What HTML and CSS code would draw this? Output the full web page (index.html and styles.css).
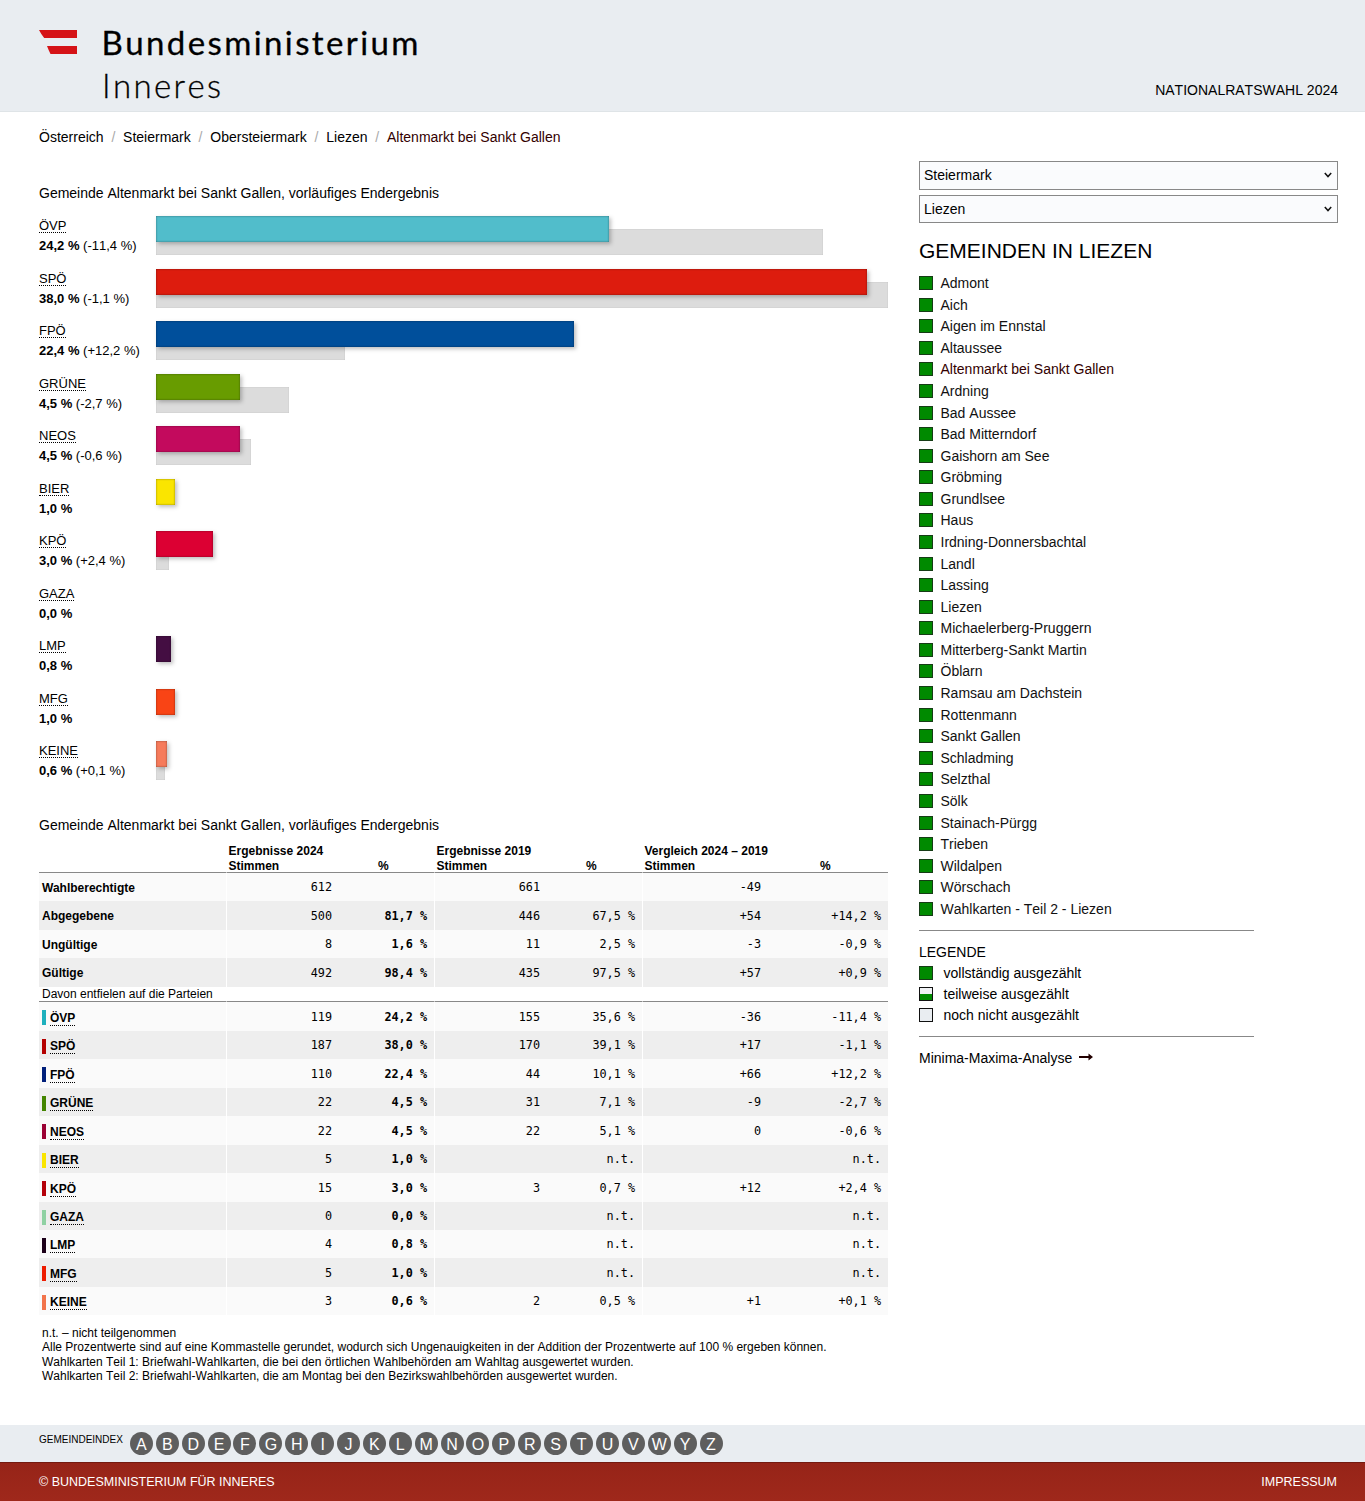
FILE: index.html
```html
<!DOCTYPE html>
<html lang="de">
<head>
<meta charset="utf-8">
<title>Nationalratswahl 2024 – Altenmarkt bei Sankt Gallen</title>
<link rel="stylesheet" href="styles.css">
</head>
<body>
<header class="header">
  <svg class="logo" width="400" height="111" viewBox="0 0 400 111" role="img" aria-label="Bundesministerium Inneres">
    <path class="logo-flag" d="M0 30H38V38H5.200Q2 34 0 30ZM8 46H38V54H11.500Q9.500 50 8 46Z"/>
    <text class="logo-main" x="62.500" y="54.500" textLength="317">Bundesministerium</text>
    <text class="logo-sub" x="63" y="98" textLength="119">Inneres</text>
  </svg>
  <div class="election">NATIONALRATSWAHL 2024</div>
</header>
<div class="page">
  <main class="main">
    <nav class="crumbs"><a>Österreich</a><i>/</i><a>Steiermark</a><i>/</i><a>Obersteiermark</a><i>/</i><a>Liezen</a><i>/</i><a class="current">Altenmarkt bei Sankt Gallen</a></nav>
    <h2 class="title">Gemeinde Altenmarkt bei Sankt Gallen, vorläufiges Endergebnis</h2>
    <section class="chart">
      <div class="party oevp"><div class="label"><abbr>ÖVP</abbr><p><b>24,2 %</b> (-11,4 %)</p></div><div class="bars"><div class="bar" style="width:453px"></div><div class="prev" style="width:667px"></div></div></div>
      <div class="party spoe"><div class="label"><abbr>SPÖ</abbr><p><b>38,0 %</b> (-1,1 %)</p></div><div class="bars"><div class="bar" style="width:711px"></div><div class="prev" style="width:732px"></div></div></div>
      <div class="party fpoe"><div class="label"><abbr>FPÖ</abbr><p><b>22,4 %</b> (+12,2 %)</p></div><div class="bars"><div class="bar" style="width:418px"></div><div class="prev" style="width:189px"></div></div></div>
      <div class="party gruene"><div class="label"><abbr>GRÜNE</abbr><p><b>4,5 %</b> (-2,7 %)</p></div><div class="bars"><div class="bar" style="width:84px"></div><div class="prev" style="width:133px"></div></div></div>
      <div class="party neos"><div class="label"><abbr>NEOS</abbr><p><b>4,5 %</b> (-0,6 %)</p></div><div class="bars"><div class="bar" style="width:84px"></div><div class="prev" style="width:95px"></div></div></div>
      <div class="party bier"><div class="label"><abbr>BIER</abbr><p><b>1,0 %</b></p></div><div class="bars"><div class="bar" style="width:19px"></div></div></div>
      <div class="party kpoe"><div class="label"><abbr>KPÖ</abbr><p><b>3,0 %</b> (+2,4 %)</p></div><div class="bars"><div class="bar" style="width:57px"></div><div class="prev" style="width:13px"></div></div></div>
      <div class="party gaza"><div class="label"><abbr>GAZA</abbr><p><b>0,0 %</b></p></div><div class="bars"></div></div>
      <div class="party lmp"><div class="label"><abbr>LMP</abbr><p><b>0,8 %</b></p></div><div class="bars"><div class="bar" style="width:15px"></div></div></div>
      <div class="party mfg"><div class="label"><abbr>MFG</abbr><p><b>1,0 %</b></p></div><div class="bars"><div class="bar" style="width:19px"></div></div></div>
      <div class="party keine"><div class="label"><abbr>KEINE</abbr><p><b>0,6 %</b> (+0,1 %)</p></div><div class="bars"><div class="bar" style="width:11px"></div><div class="prev" style="width:9px"></div></div></div>
    </section>
    <h2 class="title second">Gemeinde Altenmarkt bei Sankt Gallen, vorläufiges Endergebnis</h2>
    <section class="table">
      <div class="row head"><span></span><span>Ergebnisse 2024<br>Stimmen</span><span>%</span><span>Ergebnisse 2019<br>Stimmen</span><span>%</span><span>Vergleich 2024 – 2019<br>Stimmen</span><span>%</span></div>
      <div class="row"><span>Wahlberechtigte</span><span>612</span><span></span><span>661</span><span></span><span>-49</span><span></span></div>
      <div class="row alt"><span>Abgegebene</span><span>500</span><span>81,7 %</span><span>446</span><span>67,5 %</span><span>+54</span><span>+14,2 %</span></div>
      <div class="row"><span>Ungültige</span><span>8</span><span>1,6 %</span><span>11</span><span>2,5 %</span><span>-3</span><span>-0,9 %</span></div>
      <div class="row alt"><span>Gültige</span><span>492</span><span>98,4 %</span><span>435</span><span>97,5 %</span><span>+57</span><span>+0,9 %</span></div>
      <div class="row sub"><span>Davon entfielen auf die Parteien</span><span></span><span></span><span></span><span></span><span></span><span></span></div>
      <div class="row result oevp"><span><i></i><abbr>ÖVP</abbr></span><span>119</span><span>24,2 %</span><span>155</span><span>35,6 %</span><span>-36</span><span>-11,4 %</span></div>
      <div class="row result alt spoe"><span><i></i><abbr>SPÖ</abbr></span><span>187</span><span>38,0 %</span><span>170</span><span>39,1 %</span><span>+17</span><span>-1,1 %</span></div>
      <div class="row result fpoe"><span><i></i><abbr>FPÖ</abbr></span><span>110</span><span>22,4 %</span><span>44</span><span>10,1 %</span><span>+66</span><span>+12,2 %</span></div>
      <div class="row result alt gruene"><span><i></i><abbr>GRÜNE</abbr></span><span>22</span><span>4,5 %</span><span>31</span><span>7,1 %</span><span>-9</span><span>-2,7 %</span></div>
      <div class="row result neos"><span><i></i><abbr>NEOS</abbr></span><span>22</span><span>4,5 %</span><span>22</span><span>5,1 %</span><span>0</span><span>-0,6 %</span></div>
      <div class="row result alt bier"><span><i></i><abbr>BIER</abbr></span><span>5</span><span>1,0 %</span><span></span><span>n.t.</span><span></span><span>n.t.</span></div>
      <div class="row result kpoe"><span><i></i><abbr>KPÖ</abbr></span><span>15</span><span>3,0 %</span><span>3</span><span>0,7 %</span><span>+12</span><span>+2,4 %</span></div>
      <div class="row result alt gaza"><span><i></i><abbr>GAZA</abbr></span><span>0</span><span>0,0 %</span><span></span><span>n.t.</span><span></span><span>n.t.</span></div>
      <div class="row result lmp"><span><i></i><abbr>LMP</abbr></span><span>4</span><span>0,8 %</span><span></span><span>n.t.</span><span></span><span>n.t.</span></div>
      <div class="row result alt mfg"><span><i></i><abbr>MFG</abbr></span><span>5</span><span>1,0 %</span><span></span><span>n.t.</span><span></span><span>n.t.</span></div>
      <div class="row result keine"><span><i></i><abbr>KEINE</abbr></span><span>3</span><span>0,6 %</span><span>2</span><span>0,5 %</span><span>+1</span><span>+0,1 %</span></div>
    </section>
    <p class="notes">n.t. – nicht teilgenommen<br>Alle Prozentwerte sind auf eine Kommastelle gerundet, wodurch sich Ungenauigkeiten in der Addition der Prozentwerte auf 100 % ergeben können.<br>Wahlkarten Teil 1: Briefwahl-Wahlkarten, die bei den örtlichen Wahlbehörden am Wahltag ausgewertet wurden.<br>Wahlkarten Teil 2: Briefwahl-Wahlkarten, die am Montag bei den Bezirkswahlbehörden ausgewertet wurden.</p>
  </main>
  <aside class="side">
    <div class="select">Steiermark<svg width="8" height="6" viewBox="0 0 8 6"><path d="M.800 1L4 4.600L7.200 1"/></svg></div>
    <div class="select">Liezen<svg width="8" height="6" viewBox="0 0 8 6"><path d="M.800 1L4 4.600L7.200 1"/></svg></div>
    <h1 class="heading">GEMEINDEN IN LIEZEN</h1>
    <ul class="places">
      <li>Admont</li><li>Aich</li><li>Aigen im Ennstal</li><li>Altaussee</li><li class="current">Altenmarkt bei Sankt Gallen</li><li>Ardning</li><li>Bad Aussee</li><li>Bad Mitterndorf</li><li>Gaishorn am See</li><li>Gröbming</li><li>Grundlsee</li><li>Haus</li><li>Irdning-Donnersbachtal</li><li>Landl</li><li>Lassing</li><li>Liezen</li><li>Michaelerberg-Pruggern</li><li>Mitterberg-Sankt Martin</li><li>Öblarn</li><li>Ramsau am Dachstein</li><li>Rottenmann</li><li>Sankt Gallen</li><li>Schladming</li><li>Selzthal</li><li>Sölk</li><li>Stainach-Pürgg</li><li>Trieben</li><li>Wildalpen</li><li>Wörschach</li><li>Wahlkarten - Teil 2 - Liezen</li>
    </ul>
    <section class="legend">
      <h3>LEGENDE</h3>
      <p class="full">vollständig ausgezählt</p>
      <p class="part">teilweise ausgezählt</p>
      <p class="none">noch nicht ausgezählt</p>
    </section>
    <a class="analysis">Minima-Maxima-Analyse<svg width="14" height="8" viewBox="0 0 14 8"><path d="M0 3H9.500V.500L14 4L9.500 7.500V5H0Z"/></svg></a>
  </aside>
</div>
<nav class="index"><span>GEMEINDEINDEX</span><div class="letters"><a>A</a><a>B</a><a>D</a><a>E</a><a>F</a><a>G</a><a>H</a><a>I</a><a>J</a><a>K</a><a>L</a><a>M</a><a>N</a><a>O</a><a>P</a><a>R</a><a>S</a><a>T</a><a>U</a><a>V</a><a>W</a><a>Y</a><a>Z</a></div></nav>
<footer class="footer"><span>© BUNDESMINISTERIUM FÜR INNERES</span><span>IMPRESSUM</span></footer>
</body>
</html>
```
FILE: styles.css
```css
*, *::before { box-sizing: border-box; }
body { margin: 0; background: #fff; color: #000; font: 14px/20px "Liberation Sans", Arial, sans-serif; font-kerning: none; }
h1, h2, h3, p, ul { margin: 0; padding: 0; font-weight: 400; }
abbr { text-decoration: none; border-bottom: 1px dotted #000; }

.oevp { --c: #51bdcb; --m: #1eb0bd; }
.spoe { --c: #dd1c0e; --m: #b40000; }
.fpoe { --c: #004f9b; --m: #001f7a; }
.gruene { --c: #689c00; --m: #438400; }
.neos { --c: #c30a5d; --m: #9b0034; }
.bier { --c: #fae500; --m: #fae500; }
.kpoe { --c: #dc0033; --m: #b4000a; }
.gaza { --c: #8fd1a3; --m: #8fd1a3; }
.lmp { --c: #440e42; --m: #1c0019; }
.mfg { --c: #f94415; --m: #ed1c00; }
.keine { --c: #f67b5b; --m: #f2744b; }

.header { height: 112px; padding: 0 27px 0 39px; display: flex; justify-content: space-between; align-items: flex-end; background: #e9edf1; border-bottom: 1px solid #dfe4e7; }
.logo { display: block; }
.logo-flag { fill: #d51317; }
.logo text { font-family: Lato, sans-serif; fill: #000; }
.logo-main { font-size: 33px; font-weight: 400; stroke: #000; stroke-width: .3px; }
.logo-sub { font-size: 33px; font-weight: 300; stroke: #000; stroke-width: .3px; }
.election { margin-bottom: 11px; }

.page { display: flex; height: 1313px; padding: 0 27px 0 39px; justify-content: space-between; }
.main { width: 849px; }
.crumbs { display: flex; padding-top: 15px; }
.crumbs i { width: 19.500px; text-align: center; font-style: normal; color: #aaa; }
.current { color: #300; }
.title { margin-top: 36px; font-size: 14px; line-height: 20px; }

.chart { padding-top: 13px; }
.party { display: flex; height: 52.500px; }
.label { width: 117px; font-size: 13px; line-height: 20px; }
.label abbr { display: inline-block; line-height: 13px; }
.bars { flex: 1; }
.bar { position: relative; height: 26px; background: var(--c); box-shadow: inset 0 0 2px rgba(0,0,0,.5), 2px 2px 4px rgba(0,0,0,.25); }
.prev { height: 26px; margin-top: -13px; background: #dcdcdc; box-shadow: inset 0 0 1px #999; }
.second { margin-top: 21.500px; }

.table { margin-top: 8.900px; font: 12px/15px "Liberation Sans", Arial, sans-serif; }
.row { display: grid; grid-template: 100% / 187px 113px 95px 113px 95px 126px 120px; height: 28.500px; background: #fafafa; }
.alt { background: #eee; }
.result { height: 28.450px; }
.row span { display: flex; align-items: center; justify-content: flex-end; padding: 1.500px 7px 0 0; font-family: "DejaVu Sans Mono", monospace; font-size: 11.800px; }
.row span:nth-child(2n) { border-left: 1px solid #fff; }
.row span:nth-child(3) { font-weight: 700; }
.row span:first-child { justify-content: flex-start; padding: 2.500px 0 0 3px; font: 700 12px/15px "Liberation Sans", Arial, sans-serif; }
.row.head { height: 29px; background: #fff; }
.row.head span { display: block; padding: 0 0 0 1.500px; border-bottom: 1px solid #888; font: 700 12px/15px "Liberation Sans", Arial, sans-serif; }
.row.head span:nth-child(odd) { padding: 15px 0 0 39px; }
.row.head span:last-child { padding-left: 52px; }
.row.sub { height: 15.600px; background: #fff; }
.row.sub span { border-bottom: 1px solid #888; }
.row.sub span:first-child { padding-top: 1px; font-weight: 400; }
.result i { width: 4px; height: 15px; margin-right: 4px; background: var(--m); }
.result abbr { line-height: 13px; margin-top: 2px; }
.notes { margin: 10.500px 0 0 3px; font-size: 12px; line-height: 14.400px; white-space: nowrap; }

.side { width: 419px; padding-top: 49px; }
.select { display: flex; align-items: center; justify-content: space-between; height: 29px; margin-bottom: 5px; padding: 0 5px 1px 4px; border: 1px solid #888; background: #fafbfd; }
.select + .select { height: 28px; padding-bottom: 0; }
.select path { fill: none; stroke: #111; stroke-width: 1.500; }
.heading { margin-top: 16px; font-size: 21px; line-height: 24px; }
.places { margin-top: 9.300px; list-style: none; }
.places li { display: flex; align-items: center; height: 21.580px; color: #111; }
.places li.current { color: #300; }
.places li::before, .legend p::before { content: ""; width: 14px; height: 14px; margin-right: 7.500px; border: 1px solid #163c16; background: #008a00; }
.legend { width: 335px; height: 107px; margin-top: 10.200px; padding-top: 11px; border: solid #888; border-width: 1px 0; line-height: 21px; }
.legend h3 { font-size: 14px; line-height: 21px; }
.legend p { display: flex; align-items: center; height: 21px; }
.legend p::before { margin-right: 10.500px; }
.legend .part::before { border-color: #111; background: linear-gradient(#f0f2f5 50%, #008a00 50%); }
.legend .none::before { border-color: #111; background: #e9edf1; }
.analysis { display: flex; align-items: center; gap: 7px; margin-top: 11px; }
.analysis path { fill: #200; }
.analysis svg { margin-bottom: 2px; }

.index { display: flex; height: 37px; padding: 7px 0 0 39px; background: #e9edf1; font-size: 10px; line-height: 16px; }
.letters { display: flex; gap: 2.900px; margin-left: 7px; }
.letters a { width: 23px; height: 23px; border-radius: 50%; background: #5e5e5e; color: #fff; font-size: 16px; line-height: 25px; text-align: center; }
.footer { display: flex; justify-content: space-between; height: 39px; padding: 9px 28px 0 39px; background: linear-gradient(#962418, #9f281b); border-top: 1px solid #741a10; color: #fff; font-size: 12.500px; line-height: 20px; }
```
